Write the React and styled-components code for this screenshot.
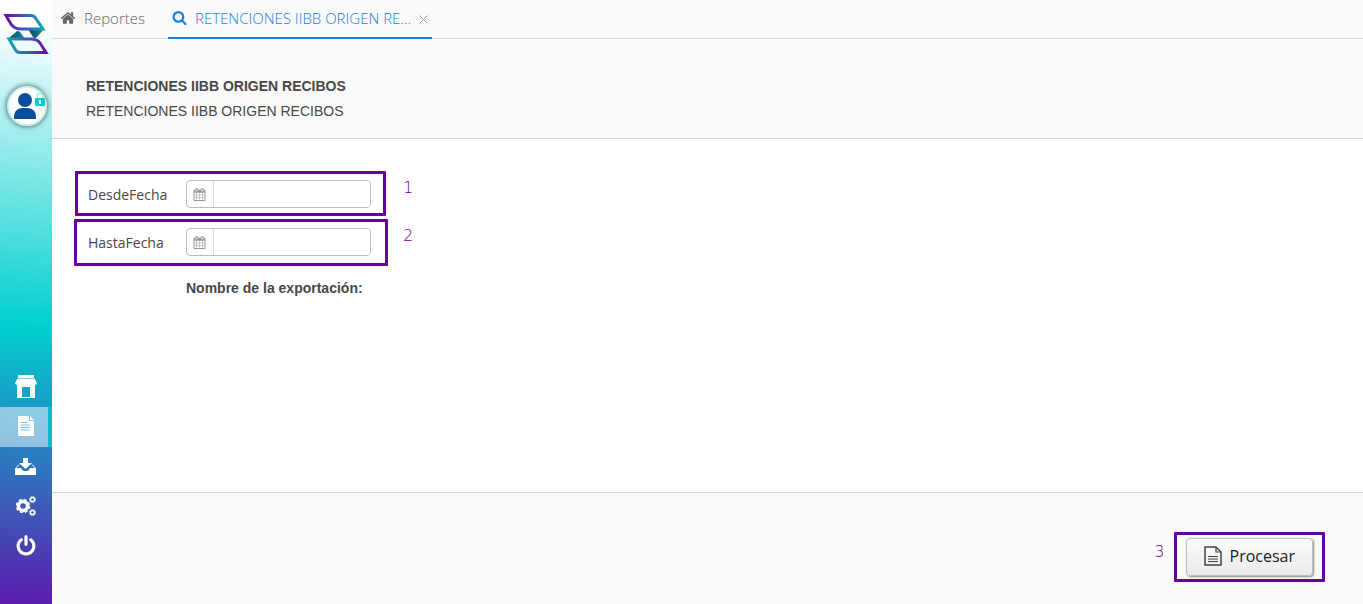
import React from "react";
import styled, { createGlobalStyle } from "styled-components";

const GlobalStyle = createGlobalStyle`
  * {
    box-sizing: border-box;
  }

  body {
    margin: 0;
    background: #ffffff;
    color: #484848;
    font-family: "Open Sans", sans-serif;
    font-size: 14px;
  }
`;

const Page = styled.div`
  display: flex;
  min-height: 100vh;
`;

const Sidebar = styled.aside`
  display: flex;
  flex-direction: column;
  align-items: center;
  flex: none;
  width: 52px;
  padding: 13px 0 37px;
  background: linear-gradient(184deg, #ffffff 4%, #00cfcf 54%, #5c1bad 100%);
`;

const LogoLink = styled.a`
  height: 42px;

  svg {
    display: block;
  }
`;

const Avatar = styled.button`
  width: 40px;
  height: 40px;
  margin: 31px 0 0 2px;
  padding: 0;
  border: 2px solid #c8f3f2;
  border-radius: 50%;
  background: #ffffff;
  box-shadow: 0 0 5px 1px #5b7777;

  svg {
    display: block;
  }
`;

const SideNav = styled.nav`
  width: 100%;
  margin-top: auto;
`;

const SideLink = styled.a`
  display: flex;
  align-items: center;
  justify-content: center;
  height: 40px;
  color: #ffffff;
  border-right: ${({ $active }) => ($active ? "4px solid #08bfcb" : "0")};
  padding: ${({ $active }) => ($active ? "0 0 2px 4px" : "0 0 2px")};
  background: ${({ $active }) => ($active ? "rgba(255, 255, 255, 0.5)" : "none")};
  background-clip: padding-box;
`;

const Main = styled.main`
  display: flex;
  flex-direction: column;
  flex: 1;
  min-width: 0;
`;

const Tabs = styled.nav`
  display: flex;
  height: 39px;
  background: #fafafa;
  border-bottom: 1px solid #dddddd;
`;

const Tab = styled.div`
  display: flex;
  align-items: center;
  height: 39px;
  padding: ${({ $active }) => ($active ? "0 4px 2px" : "0 23px 2px 8px")};
  border-bottom: 2px solid ${({ $active }) => ($active ? "#197de1" : "transparent")};
`;

const TabLink = styled.a`
  display: flex;
  align-items: center;
  gap: 8px;
  font-size: 15px;
  font-weight: 300;
  line-height: 20px;
  color: ${({ $active }) => ($active ? "#197de1" : "#666666")};
  text-decoration: none;
`;

const CloseButton = styled.button`
  display: flex;
  margin: 4px 0 0 8px;
  padding: 0;
  border: 0;
  background: none;
  color: #a0a0a0;
`;

const Header = styled.header`
  padding: 35px 34px 14px;
  background: #fafafa;
  border-bottom: 1px solid #d3d3d3;
  font-family: "Liberation Sans", Arial, sans-serif;
  line-height: 25px;
`;

const Title = styled.h1`
  margin: 0;
  font-size: 14px;
`;

const Subtitle = styled.p`
  margin: 0;
`;

const Form = styled.form`
  display: flex;
  flex-direction: column;
  align-items: flex-start;
  gap: 20px;
  flex: 1;
  padding: 41px 36px 20px;
`;

const Field = styled.div`
  position: relative;
  display: flex;
  align-items: center;
`;

const Label = styled.label`
  width: 98px;
  padding-top: 2px;
  line-height: 26px;
`;

const DateBox = styled.div`
  display: flex;
  width: 185px;
  height: 28px;
  border: 1px solid #bdbdbd;
  border-radius: 4px;
  overflow: hidden;
`;

const Addon = styled.span`
  display: flex;
  align-items: center;
  justify-content: center;
  width: 27px;
  padding: 1px 1px 0 0;
  border-right: 1px solid #dddddd;
  color: #999999;
`;

const DateInput = styled.input`
  flex: 1;
  min-width: 0;
  padding: 0 6px;
  border: 0;
  outline: 0;
  background: #ffffff;
  font: inherit;
`;

const ExportName = styled.strong`
  margin: 2px 0 0 98px;
  font-family: "Liberation Sans", Arial, sans-serif;
  line-height: 20px;
`;

const Mark = styled.span`
  position: absolute;
  inset: ${({ $inset }) => $inset};
  border: 3px solid #6600a1;
  border-radius: 1px;
  pointer-events: none;
`;

const Step = styled.span`
  position: absolute;
  ${({ $side }) =>
    $side === "left"
      ? "top: 4px; right: calc(100% + 21px);"
      : "top: -2px; left: calc(100% + 32px);"}
  color: #6600a1;
  font-family: "DejaVu Sans", sans-serif;
  font-size: 16px;
  font-weight: 200;
  line-height: 20px;
`;

const Footer = styled.footer`
  display: flex;
  justify-content: flex-end;
  height: 112px;
  padding: 45px 50px 0 20px;
  background: #fafafa;
  border-top: 1px solid #d3d3d3;
`;

const Action = styled.div`
  position: relative;
  height: 38px;
`;

const ProcessButton = styled.button`
  display: flex;
  align-items: center;
  gap: 8px;
  height: 38px;
  padding: 0 17px 2px;
  border: 1px solid #bcbcbc;
  border-radius: 4px;
  background: linear-gradient(#fbfbfb, #ebebeb);
  box-shadow: 1px 1px 2px #888888;
  color: #222222;
  font-family: "Open Sans", sans-serif;
  font-size: 16px;
`;

const FaIcon = ({ size, path }) => (
  <svg width={size} height={size} viewBox="0 0 1792 1792" fill="currentColor" aria-hidden="true">
    <path d={path} />
  </svg>
);

const homePath =
  "M1472 992v480q0 26-19 45t-45 19h-384v-384h-256v384h-384q-26 0-45-19t-19-45v-480q0-1 .5-3t.5-3l575-474 575 474q1 2 1 6zm223-69l-62 74q-8 9-21 11h-3q-13 0-21-7l-692-577-692 577q-12 8-24 7-13-2-21-11l-62-74q-8-10-7-23.5t11-21.5l719-599q32-26 76-26t76 26l244 204v-195q0-14 9-23t23-9h192q14 0 23 9t9 23v408l219 182q10 8 11 21.5t-7 23.5z";
const searchPath =
  "M1216 832q0-185-131.5-316.5t-316.5-131.5-316.5 131.5-131.5 316.5 131.5 316.5 316.5 131.5 316.5-131.5 131.5-316.5zm512 832q0 52-38 90t-90 38q-54 0-90-38l-343-342q-179 124-399 124-143 0-273.5-55.5t-225-150-150-225-55.5-273.5 55.5-273.5 150-225 225-150 273.5-55.5 273.5 55.5 225 150 150 225 55.5 273.5q0 220-124 399l343 343q37 37 37 90z";
const calendarPath =
  "M192 1664h288v-288h-288v288zm352 0h320v-288h-320v288zm-352-352h288v-320h-288v320zm352 0h320v-320h-320v320zm-352-384h288v-288h-288v288zm736 736h320v-288h-320v288zm-384-736h320v-288h-320v288zm768 736h288v-288h-288v288zm-384-352h320v-320h-320v320zm-352-864v-288q0-13-9.5-22.5t-22.5-9.5h-64q-13 0-22.5 9.5t-9.5 22.5v288q0 13 9.5 22.5t22.5 9.5h64q13 0 22.5-9.5t9.5-22.5zm736 864h288v-320h-288v320zm-384-384h320v-288h-320v288zm384 0h288v-288h-288v288zm32-480v-288q0-13-9.5-22.5t-22.5-9.5h-64q-13 0-22.5 9.5t-9.5 22.5v288q0 13 9.5 22.5t22.5 9.5h64q13 0 22.5-9.5t9.5-22.5zm384-64v1280q0 52-38 90t-90 38h-1408q-52 0-90-38t-38-90v-1280q0-52 38-90t90-38h128v-96q0-66 47-113t113-47h64q66 0 113 47t47 113v96h384v-96q0-66 47-113t113-47h64q66 0 113 47t47 113v96h128q52 0 90 38t38 90z";
const powerPath =
  "M1664 896q0 156-61 298t-164 245-245 164-298 61-298-61-245-164-164-245-61-298q0-182 80.5-343t226.5-270q43-32 95.5-25t83.5 50q32 42 24.5 94.5t-49.5 84.5q-98 74-151.5 181t-53.5 228q0 104 40.5 198.5t109.5 163.5 163.5 109.5 198.5 40.5 198.5-40.5 163.5-109.5 109.5-163.5 40.5-198.5q0-121-53.5-228t-151.5-181q-42-32-49.5-84.5t24.5-94.5q31-43 84-50t95 25q146 109 226.5 270t80.5 343zm-640-768v640q0 52-38 90t-90 38-90-38-38-90v-640q0-52 38-90t90-38 90 38 38 90z";

const Logo = () => (
  <svg width="46" height="42" viewBox="0 0 46 42" aria-hidden="true">
    <defs>
      <linearGradient id="logoTop" x1="0" x2="1">
        <stop offset="0" stopColor="#6a0dad" />
        <stop offset="0.45" stopColor="#4a50b8" />
        <stop offset="1" stopColor="#10a5b5" />
      </linearGradient>
      <linearGradient id="logoBottom" x1="0" x2="1">
        <stop offset="0" stopColor="#10a5b5" />
        <stop offset="0.55" stopColor="#4a50b8" />
        <stop offset="1" stopColor="#6a0dad" />
      </linearGradient>
      <linearGradient id="logoFold" x1="0" x2="1">
        <stop offset="0" stopColor="#123f55" />
        <stop offset="1" stopColor="#0a95a0" />
      </linearGradient>
    </defs>
    <path d="M25 16h16L34 24Q32 26 30 24z" fill="url(#logoFold)" />
    <path d="M5 26L13 19Q15 17 17 19L22 26z" fill="url(#logoFold)" />
    <path
      d="M3 2.500H28Q31 2.500 32.500 5L40 16H18Q11 16 8 11z"
      fill="none"
      stroke="url(#logoTop)"
      strokeWidth="3"
    />
    <path
      d="M6 26H28Q34 26 37 30L43 39.500H17Q14 39.500 12.500 37z"
      fill="none"
      stroke="url(#logoBottom)"
      strokeWidth="3"
    />
  </svg>
);

const UserPicture = () => (
  <svg width="36" height="36" viewBox="0 0 36 36" aria-hidden="true">
    <circle cx="16" cy="12" r="7" fill="#0a4d9b" />
    <path d="M5 31v-2c0-6 4-9 9-9h4c5 0 9 3 9 9v2z" fill="#0a4d9b" />
    <path d="M28 11V8.500a3 3 0 0 1 6 0V11" fill="none" stroke="#a5efeb" strokeWidth="1.500" />
    <rect x="26" y="10" width="10" height="8" rx="1" fill="#0ccdc8" />
    <path d="M30 12h2v4h-2z" fill="#d8fffc" />
  </svg>
);

const StoreIcon = () => (
  <svg width="22" height="23" viewBox="0 0 22 23" fill="#ffffff" aria-hidden="true">
    <path d="M3 0h16v3H3zM2.500 3.500h17L22 8c0 2-3 2.500-4 .8-1 1.700-3.500 1.700-4.500 0-1 1.700-4 1.700-5 0-1 1.700-3.500 1.700-4.500 0C3 10.500 0 10 0 8z" />
    <path fillRule="evenodd" d="M2 9h18v14H2zM7 12v10h8V12z" />
  </svg>
);

const FileIcon = () => (
  <svg width="16" height="20" viewBox="0 0 16 20" aria-hidden="true">
    <path d="M0 0h11v5h5v15H0z" fill="#ffffff" />
    <path d="M12 0l4 4h-4z" fill="#ffffff" />
    <path d="M3 6.500h6M3 9h9M3 11.500h9M3 14h9" stroke="#82b9d6" fill="none" />
  </svg>
);

const InboxIcon = () => (
  <svg width="22" height="17" viewBox="0 0 22 17" fill="#ffffff" aria-hidden="true">
    <path d="M8 0h5v5h4l-6.500 6L4 5h4z" />
    <path d="M0 10h6c1 2.500 2.500 3 4.500 3s3.500-.5 4.500-3h6v7H0z" />
    <path d="M.5 10.500L4 6.500M20.500 10.500L17 6.500" stroke="#ffffff" fill="none" />
  </svg>
);

const GearsIcon = () => (
  <svg width="20" height="20" viewBox="0 0 20 20" fill="none" stroke="#ffffff" aria-hidden="true">
    <circle cx="7" cy="10" r="4.500" strokeWidth="3.400" />
    <circle cx="7" cy="10" r="6.400" strokeWidth="1.800" strokeDasharray="2.900 2.126" />
    <circle cx="16.500" cy="3.500" r="2.100" strokeWidth="1.500" />
    <circle cx="16.500" cy="3.500" r="3" strokeWidth="0.900" strokeDasharray="1.180 1.180" />
    <circle cx="16.500" cy="16.500" r="2.100" strokeWidth="1.500" />
    <circle cx="16.500" cy="16.500" r="3" strokeWidth="0.900" strokeDasharray="1.180 1.180" />
  </svg>
);

const CloseIcon = () => (
  <svg width="9" height="9" viewBox="0 0 9 9" stroke="currentColor" aria-hidden="true">
    <path d="M.5.5l8 8M8.500.5l-8 8" />
  </svg>
);

const DocumentIcon = () => (
  <svg width="18" height="20" viewBox="0 0 18 20" fill="none" stroke="#444444" aria-hidden="true">
    <path d="M1 1h11l5 5v13H1z" strokeWidth="1.500" strokeLinejoin="round" />
    <path d="M12 1v5h5" strokeWidth="1.200" />
    <path d="M4 10.500h10M4 13h10M4 15.500h10" strokeWidth="1.200" />
  </svg>
);

const menu = [
  { name: "Comercio", icon: <StoreIcon /> },
  { name: "Reportes", icon: <FileIcon />, active: true },
  { name: "Descargas", icon: <InboxIcon /> },
  { name: "Configuración", icon: <GearsIcon /> },
  { name: "Salir", icon: <FaIcon size={22} path={powerPath} /> },
];

const fields = [
  { id: "desdeFecha", label: "DesdeFecha", step: 1, inset: "-9px -15px -8px -13px" },
  { id: "hastaFecha", label: "HastaFecha", step: 2, inset: "-9px -17px -10px -14px" },
];

function App() {
  return (
    <Page>
      <GlobalStyle />
      <Sidebar>
        <LogoLink href="#" aria-label="Inicio">
          <Logo />
        </LogoLink>
        <Avatar type="button" aria-label="Usuario">
          <UserPicture />
        </Avatar>
        <SideNav>
          {menu.map((item) => (
            <SideLink key={item.name} href="#" aria-label={item.name} $active={item.active}>
              {item.icon}
            </SideLink>
          ))}
        </SideNav>
      </Sidebar>
      <Main>
        <Tabs>
          <Tab>
            <TabLink href="#">
              <FaIcon size={16} path={homePath} />
              Reportes
            </TabLink>
          </Tab>
          <Tab $active>
            <TabLink href="#" $active>
              <FaIcon size={15} path={searchPath} />
              RETENCIONES IIBB ORIGEN RE...
            </TabLink>
            <CloseButton type="button" aria-label="Cerrar">
              <CloseIcon />
            </CloseButton>
          </Tab>
        </Tabs>
        <Header>
          <Title>RETENCIONES IIBB ORIGEN RECIBOS</Title>
          <Subtitle>RETENCIONES IIBB ORIGEN RECIBOS</Subtitle>
        </Header>
        <Form id="reporte" onSubmit={(e) => e.preventDefault()}>
          {fields.map((field) => (
            <Field key={field.id}>
              <Label htmlFor={field.id}>{field.label}</Label>
              <DateBox>
                <Addon>
                  <FaIcon size={13} path={calendarPath} />
                </Addon>
                <DateInput id={field.id} type="text" />
              </DateBox>
              <Mark $inset={field.inset} />
              <Step>{field.step}</Step>
            </Field>
          ))}
          <ExportName>Nombre de la exportación:</ExportName>
        </Form>
        <Footer>
          <Action>
            <ProcessButton type="submit" form="reporte">
              <DocumentIcon />
              Procesar
            </ProcessButton>
            <Mark $inset="-6px -12px" />
            <Step $side="left">3</Step>
          </Action>
        </Footer>
      </Main>
    </Page>
  );
}

export default App;
